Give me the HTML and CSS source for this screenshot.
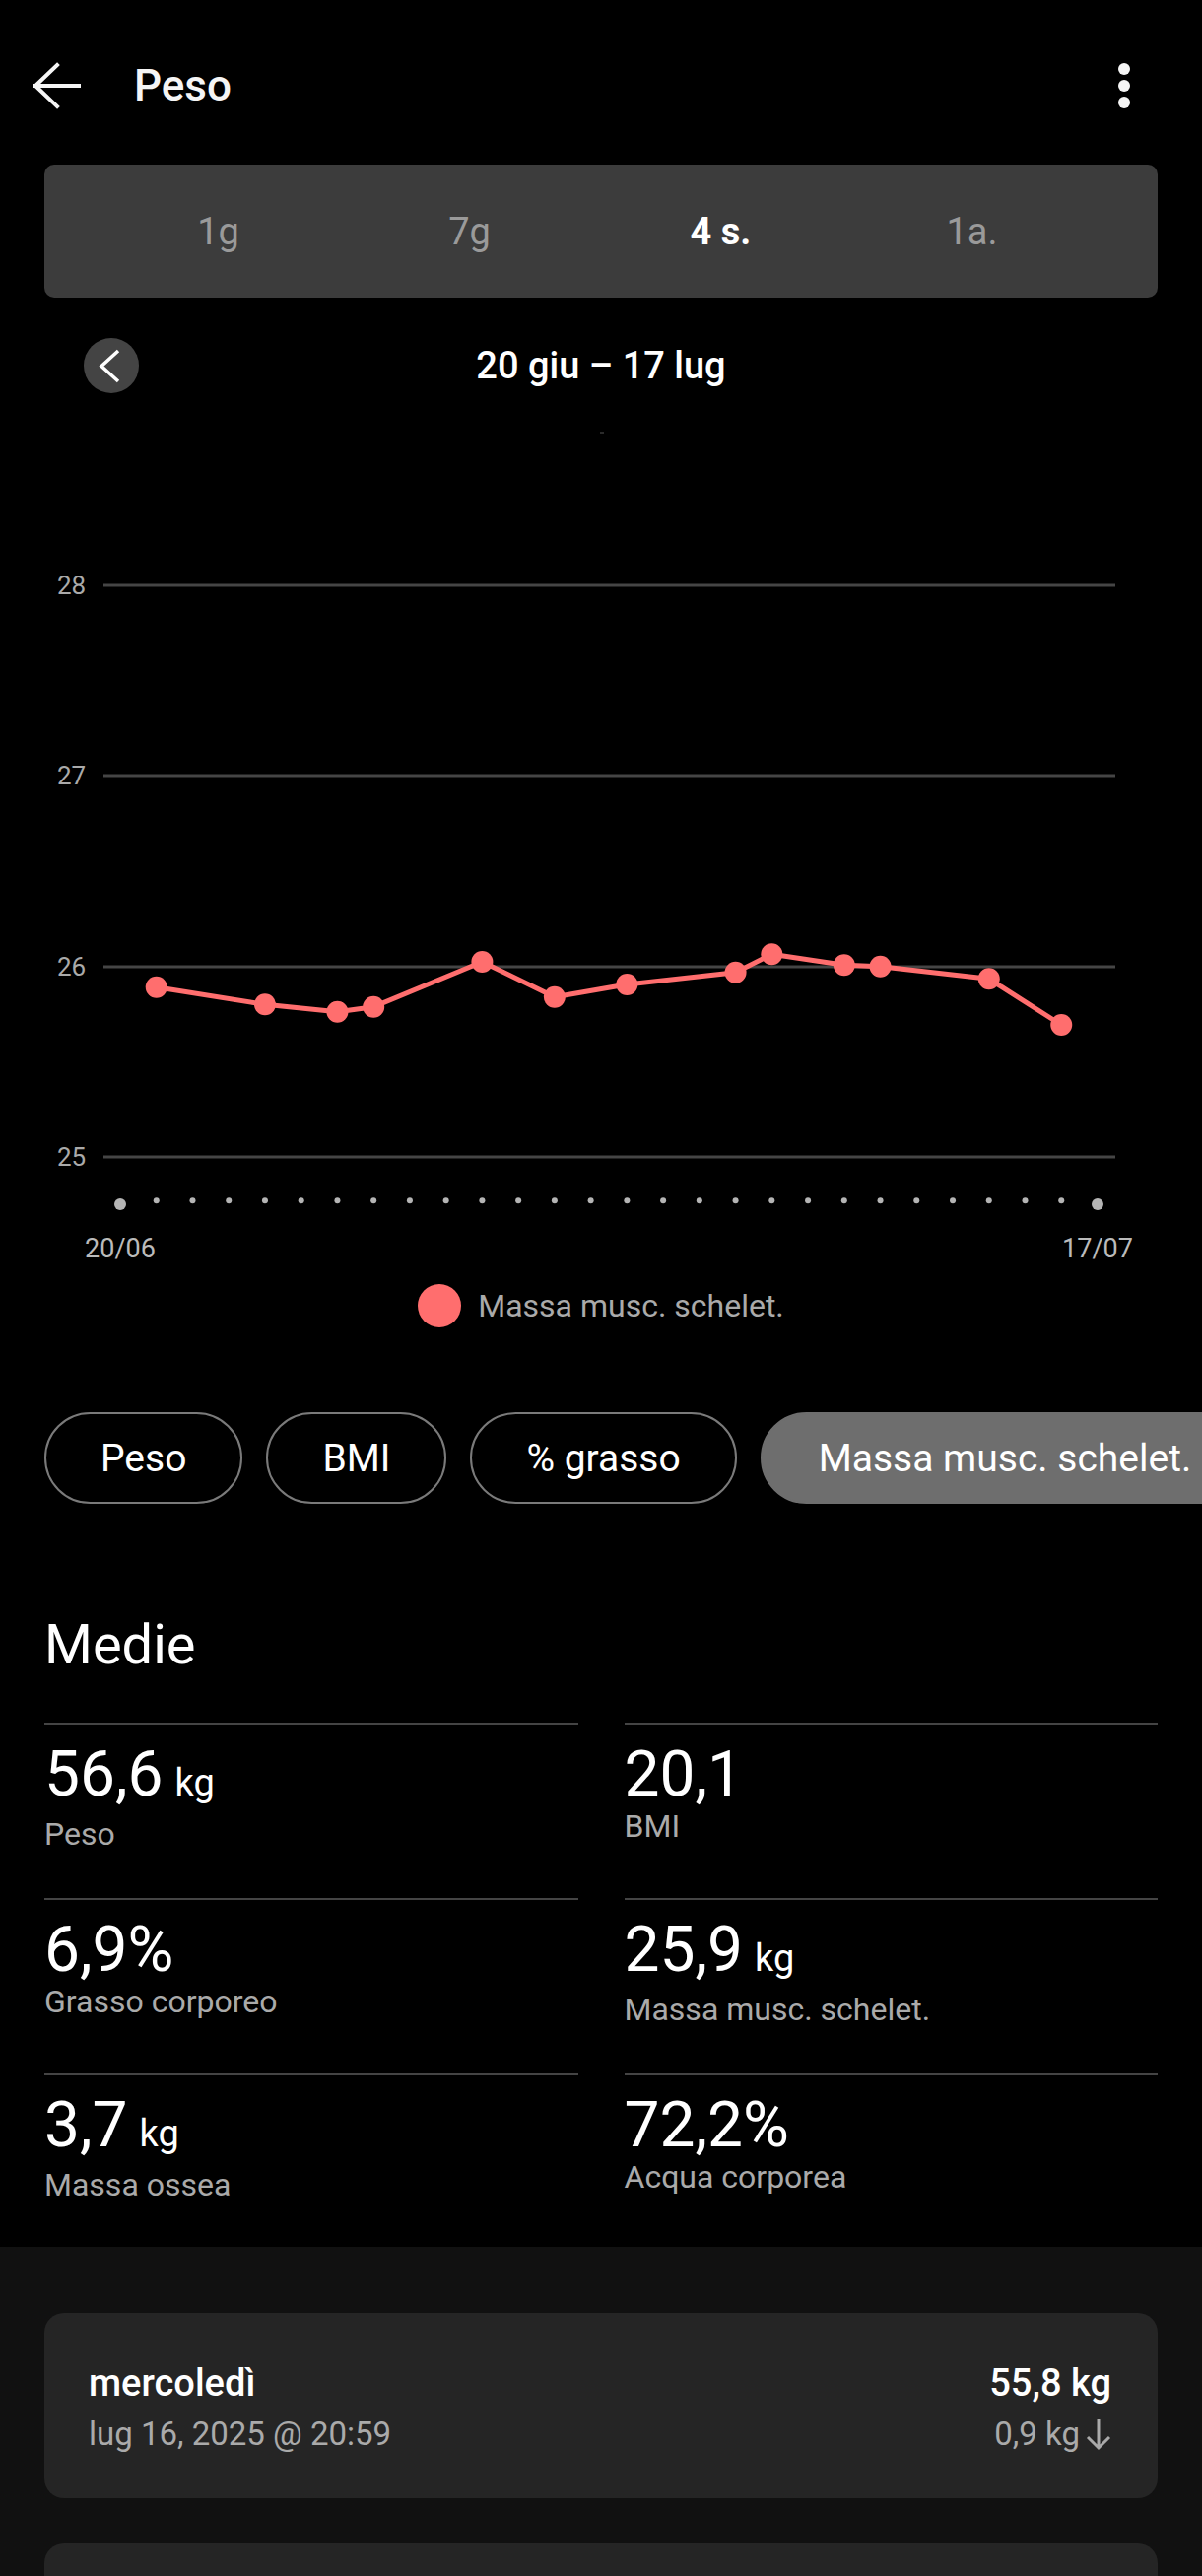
FILE: index.html
```html
<!DOCTYPE html>
<html>
<head>
    <title>Peso</title>
    <link rel="stylesheet" href="styles.css">
</head>
<body>
    <header class="topbar">
        <svg class="back" width="50" height="50" viewBox="0 0 50 50">
            <path d="M3 25 H47 M25 4 L3 25 L25 46" fill="none" stroke="#f5f5f5" stroke-width="4" stroke-linecap="square"/>
        </svg>
        <h1 class="title">Peso</h1>
        <svg class="menu" width="24" height="50" viewBox="0 0 24 50">
            <circle cx="12" cy="8" r="6" fill="#f5f5f5"/>
            <circle cx="12" cy="25" r="6" fill="#f5f5f5"/>
            <circle cx="12" cy="42" r="6" fill="#f5f5f5"/>
        </svg>
    </header>

    <div class="periods">
        <span class="period">1g</span>
        <span class="period">7g</span>
        <span class="period active">4 s.</span>
        <span class="period">1a.</span>
    </div>

    <div class="range">
        <div class="range-left">
            <svg class="prev" width="56" height="56" viewBox="0 0 56 56">
                <circle cx="28" cy="28" r="28" fill="#444"/>
                <path d="M35 13 L18 28.5 L35 44" fill="none" stroke="#fff" stroke-width="3.5"/>
            </svg>
        </div>
        <div class="range-title">20 giu – 17 lug</div>
        <div></div>
    </div>

    <!-- grafico: coordinate della pagina -->
    <svg class="chart" width="1220" height="901" viewBox="0 399 1220 901">
        <rect x="609" y="438" width="4" height="2" fill="#2a2a2a"/>
        <g stroke="#454545" stroke-width="3">
            <line x1="105" y1="594" x2="1132" y2="594"/>
            <line x1="105" y1="787" x2="1132" y2="787"/>
            <line x1="105" y1="981" x2="1132" y2="981"/>
            <line x1="105" y1="1174" x2="1132" y2="1174"/>
        </g>
        <g class="ylabel" fill="#aaa">
            <text x="58" y="603">28</text>
            <text x="58" y="796">27</text>
            <text x="58" y="990">26</text>
            <text x="58" y="1183">25</text>
        </g>
        <g id="days" fill="#b5b5b5"></g>
        <polyline id="line" fill="none" stroke="#ff6e6e" stroke-width="5" stroke-linejoin="round"/>
        <g id="points" fill="#ff6e6e"></g>
        <g class="xlabel" fill="#bbb">
            <text x="122" y="1276" text-anchor="middle">20/06</text>
            <text x="1114" y="1276" text-anchor="middle">17/07</text>
        </g>
    </svg>

    <div class="legend">
        <span class="legend-dot"></span>
        <span class="legend-text">Massa musc. schelet.</span>
    </div>

    <div class="chips">
        <span class="chip">Peso</span>
        <span class="chip">BMI</span>
        <span class="chip">% grasso</span>
        <span class="chip selected">Massa musc. schelet.</span>
    </div>

    <section class="averages">
        <h2>Medie</h2>
        <div class="stats">
            <div class="stat">
                <div class="value">56,6<span class="unit">kg</span></div>
                <div class="label">Peso</div>
            </div>
            <div class="stat">
                <div class="value">20,1</div>
                <div class="label">BMI</div>
            </div>
            <div class="stat">
                <div class="value">6,9%</div>
                <div class="label">Grasso corporeo</div>
            </div>
            <div class="stat">
                <div class="value">25,9<span class="unit">kg</span></div>
                <div class="label">Massa musc. schelet.</div>
            </div>
            <div class="stat">
                <div class="value">3,7<span class="unit">kg</span></div>
                <div class="label">Massa ossea</div>
            </div>
            <div class="stat">
                <div class="value">72,2%</div>
                <div class="label">Acqua corporea</div>
            </div>
        </div>
    </section>

    <section class="history">
        <div class="entry">
            <div class="entry-left">
                <div class="entry-day">mercoledì</div>
                <div class="entry-date">lug 16, 2025 @ 20:59</div>
            </div>
            <div class="entry-right">
                <div class="entry-weight">55,8 kg</div>
                <div class="entry-diff">0,9 kg
                    <svg width="26" height="34" viewBox="0 0 26 34">
                        <path d="M13 2 V31 M2 20 L13 31 L24 20" fill="none" stroke="#aaa" stroke-width="3"/>
                    </svg>
                </div>
            </div>
        </div>
        <div class="entry"></div>
    </section>

    <script>
        // punti del grafico (giorno, y)
        const ns = 'http://www.w3.org/2000/svg';
        const step = 36.74;
        const data = [
            [1, 1001.7], [4, 1019.3], [6, 1026.7], [7, 1021.7], [10, 976],
            [12, 1011.7], [14, 999], [17, 986.7], [18, 968.3], [20, 979.3],
            [21, 980.7], [24, 993.3], [26, 1040]
        ];

        const days = document.getElementById('days');
        for (let i = 0; i < 28; i++) {
            const c = document.createElementNS(ns, 'circle');
            const end = i === 0 || i === 27;
            c.setAttribute('cx', 122 + step * i);
            c.setAttribute('cy', end ? 1222 : 1218.3);
            c.setAttribute('r', end ? 6 : 3);
            days.appendChild(c);
        }

        const points = document.getElementById('points');
        const coords = data.map(([d, y]) => {
            const x = 122 + step * d;
            const c = document.createElementNS(ns, 'circle');
            c.setAttribute('cx', x);
            c.setAttribute('cy', y);
            c.setAttribute('r', 11);
            points.appendChild(c);
            return x + ',' + y;
        });
        document.getElementById('line').setAttribute('points', coords.join(' '));
    </script>
</body>
</html>
```

FILE: styles.css
```css
body {
    margin: 0;
    background-color: #000;
    color: #fff;
    font-family: Roboto, "Liberation Sans", sans-serif;
    overflow-x: hidden;
}

.topbar {
    display: flex;
    align-items: center;
    height: 94px;
    padding: 40px 67px 0 33px;
}

.title {
    margin: 0 0 0 53px;
    font-size: 44px;
    font-weight: 500;
    color: #f5f5f5;
    flex: 1;
}

.periods {
    display: grid;
    grid-template-columns: repeat(4, 1fr);
    align-items: center;
    height: 135px;
    margin: 33px 45px 0;
    padding: 0 61px 0 49px;
    background-color: #3c3c3c;
    border-radius: 10px;
}

.period {
    text-align: center;
    font-size: 38px;
    color: #9a9a9a;
}

.period.active {
    color: #fff;
    font-weight: 700;
}

.range {
    display: grid;
    grid-template-columns: 1fr auto 1fr;
    align-items: center;
    height: 56px;
    margin-top: 41px;
}

.range-left {
    padding-left: 85px;
    display: flex;
}

.range-title {
    font-size: 38px;
    font-weight: 500;
}

.chart {
    display: block;
}

.ylabel text {
    font-size: 26px;
}

.xlabel text {
    font-size: 27px;
}

.legend {
    display: flex;
    align-items: center;
    justify-content: center;
    gap: 17px;
    height: 50px;
}

.legend-dot {
    width: 44px;
    height: 44px;
    border-radius: 50%;
    background-color: #ff6e6e;
}

.legend-text {
    font-size: 32px;
    color: #aaa;
}

.chips {
    display: flex;
    gap: 24px;
    margin-top: 83px;
    padding-left: 45px;
    white-space: nowrap;
    overflow: hidden;
}

.chip {
    display: flex;
    align-items: center;
    height: 89px;
    padding: 0 55px;
    border: 2px solid #7a7a7a;
    border-radius: 47px;
    font-size: 39px;
    flex-shrink: 0;
}

.chip.selected {
    background-color: #6e6e6e;
    border-color: #6e6e6e;
    padding: 0 57px;
}

.averages {
    padding: 0 45px 45px;
}

.averages h2 {
    margin: 111px 0 0;
    font-size: 56px;
    font-weight: 400;
    line-height: 64px;
}

.stats {
    display: grid;
    grid-template-columns: 1fr 1fr;
    column-gap: 47px;
    margin-top: 47px;
}

.stat {
    border-top: 2px solid #444;
    padding: 13px 0 47px;
}

.stat:nth-last-child(-n+2) {
    padding-bottom: 0;
}

.value {
    font-size: 64px;
    line-height: 76px;
}

.unit {
    font-size: 38px;
    margin-left: 12px;
}

.label {
    margin-top: -4px;
    font-size: 32px;
    line-height: 36px;
    color: #aaa;
}

.history {
    background-color: #111;
    padding: 67px 45px 40px;
}

.entry {
    display: flex;
    justify-content: space-between;
    height: 188px;
    box-sizing: border-box;
    padding: 50px 47px 0 45px;
    margin-bottom: 46px;
    background-color: #252525;
    border-radius: 20px;
}

.entry-day,
.entry-weight {
    font-size: 38px;
    font-weight: 500;
    line-height: 42px;
}

.entry-date,
.entry-diff {
    margin-top: 12px;
    font-size: 33px;
    line-height: 38px;
    color: #aaa;
}

.entry-right {
    text-align: right;
}

.entry-diff {
    display: flex;
    align-items: center;
    justify-content: flex-end;
    gap: 6px;
}
```
